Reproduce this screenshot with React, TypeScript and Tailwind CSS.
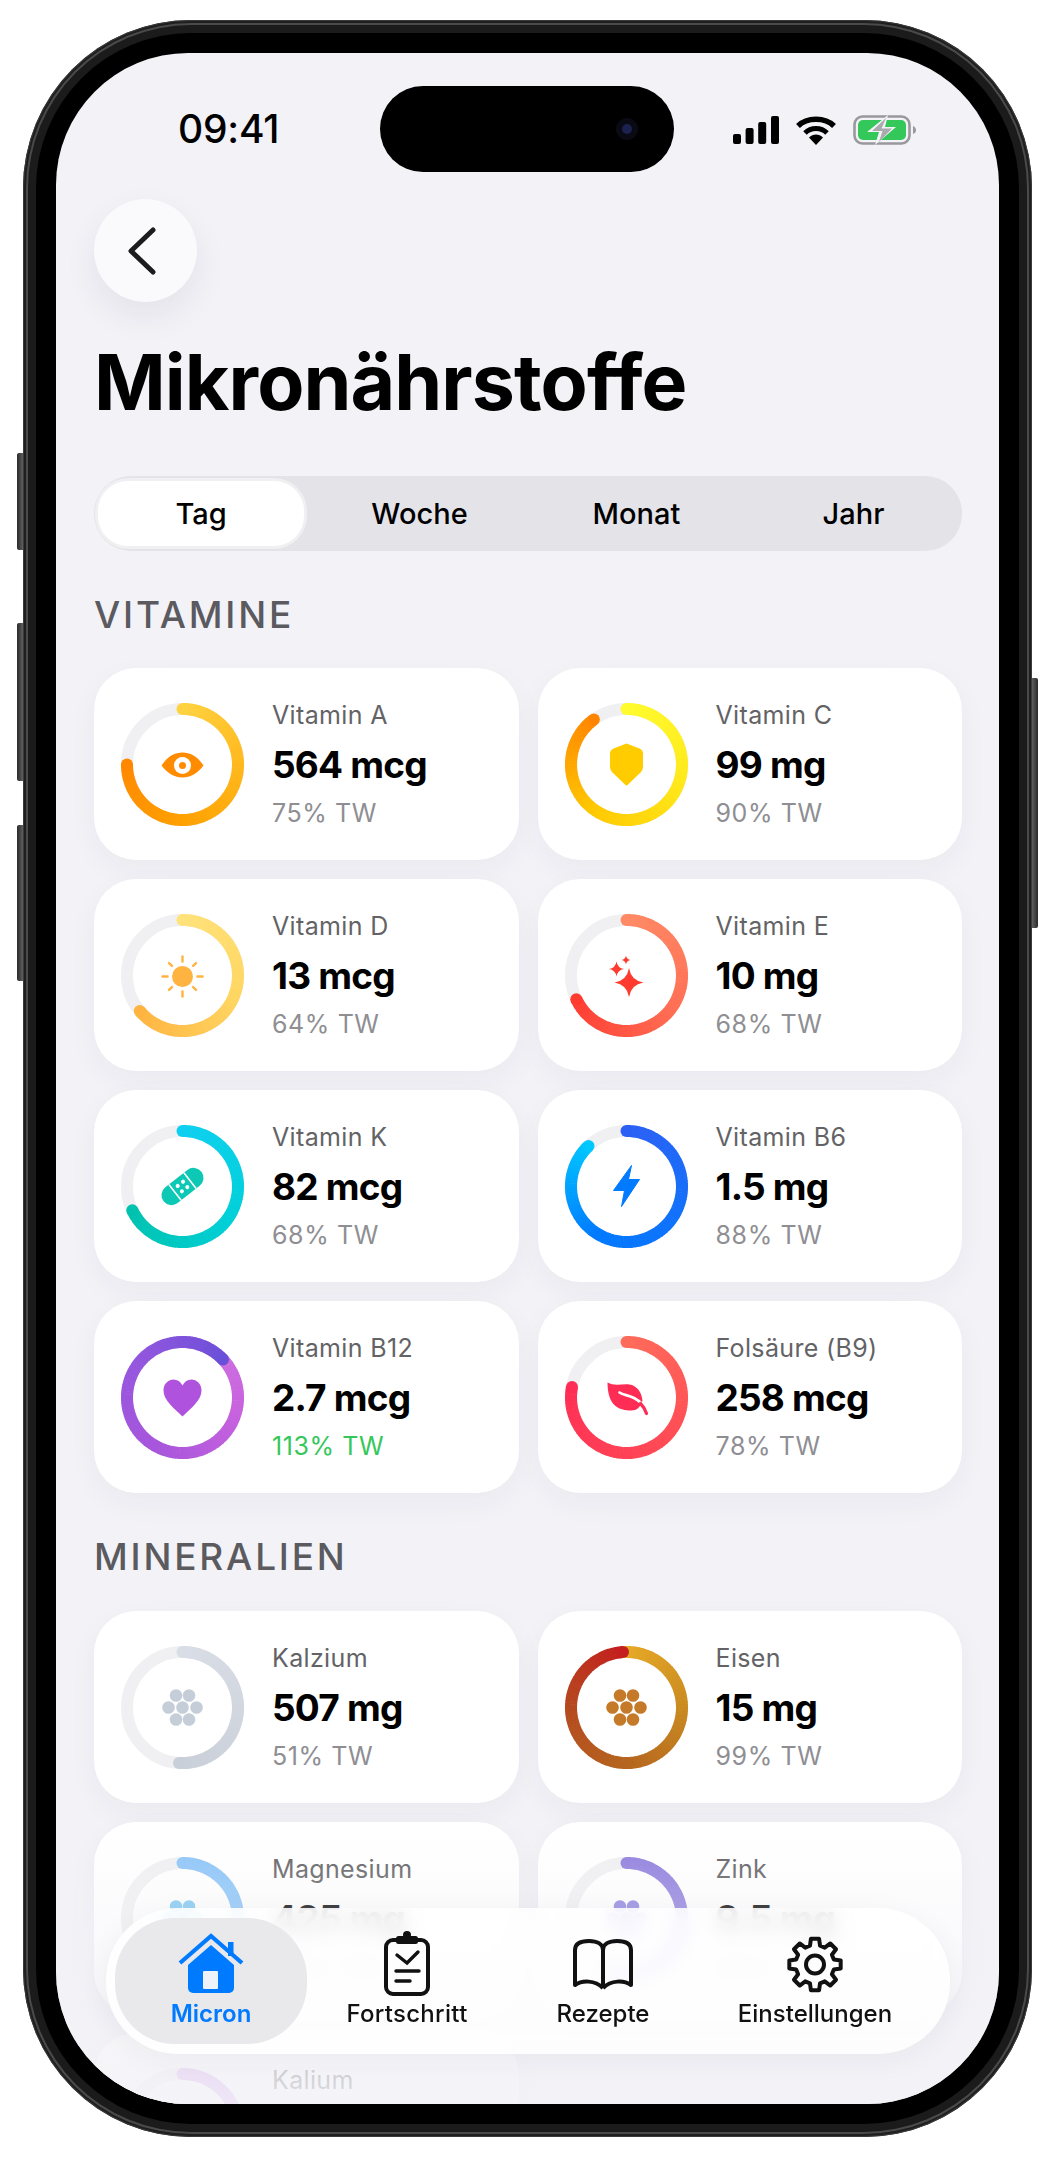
import React from "react";

const hex = (c: string) => [1, 3, 5].map((i) => parseInt(c.slice(i, i + 2), 16));
const mix = (stops: string[], t: number) => {
  const p = Math.min(0.9999, Math.max(0, t)) * (stops.length - 1);
  const i = Math.floor(p);
  const f = p - i;
  const a = hex(stops[i]);
  const b = hex(stops[i + 1]);
  return `rgb(${a.map((v, k) => Math.round(v + (b[k] - v) * f)).join(",")})`;
};

const C = 61.5;
const R = 55.5;
const pt = (deg: number) => {
  const r = ((deg - 90) * Math.PI) / 180;
  return [C + R * Math.cos(r), C + R * Math.sin(r)];
};

function Ring({ pct, stops, children }: { pct: number; stops: string[]; children?: React.ReactNode }) {
  const total = (pct / 100) * 360;
  const step = 3;
  const n = Math.ceil(total / step);
  const segs = [];
  for (let i = 0; i < n; i++) {
    const a0 = i * step;
    const a1 = Math.min(total, (i + 1) * step + 0.6);
    const [x0, y0] = pt(a0);
    const [x1, y1] = pt(a1);
    segs.push(
      <path
        key={i}
        d={`M${x0} ${y0}A${R} ${R} 0 0 1 ${x1} ${y1}`}
        fill="none"
        stroke={mix(stops, i / n)}
        strokeWidth={12}
      />
    );
  }
  const [sx, sy] = pt(0);
  const [ex, ey] = pt(total);
  return (
    <svg width={123} height={123} viewBox="0 0 123 123" className="shrink-0">
      <circle cx={C} cy={C} r={R} fill="none" stroke="#f0f0f2" strokeWidth={12} />
      <circle cx={sx} cy={sy} r={6} fill={mix(stops, 0)} />
      {segs}
      <circle cx={ex} cy={ey} r={6} fill={mix(stops, 1)} />
      <g transform={`translate(${C} ${C})`}>{children}</g>
    </svg>
  );
}

const Eye = () => (
  <g>
    <path d="M-21 1C-15-8-8-12 0-12S15-8 21 1C15 9 8 13 0 13S-15 9-21 1Z" fill="#ff8c00" />
    <circle cx={0} cy={1} r={8.5} fill="#fff" />
    <circle cx={0} cy={1} r={3.5} fill="#ff8c00" />
  </g>
);
const Shield = () => (
  <path
    d="M0-21L13-16Q16.500-14.500 16.500-11V2Q16.500 6 13 9L1 20.500Q0 21.500-1 20.500L-13 9Q-16.500 6-16.500 2V-11Q-16.500-14.500-13-16Z"
    fill="#ffcc00"
  />
);
const Sun = () => (
  <g transform="translate(0 1)">
    <circle r={10.5} fill="#ffb340" />
    {[0, 45, 90, 135, 180, 225, 270, 315].map((a) => (
      <line
        key={a}
        x1={0}
        y1={-15}
        x2={0}
        y2={a % 90 === 0 ? -20 : -19}
        stroke="#ffb340"
        strokeWidth={2.4}
        strokeLinecap="round"
        transform={`rotate(${a})`}
      />
    ))}
  </g>
);
const star = (x: number, y: number, r: number) =>
  `M${x} ${y - r}Q${x + r * 0.14} ${y - r * 0.14} ${x + r} ${y}Q${x + r * 0.14} ${y + r * 0.14} ${x} ${y + r}Q${x - r * 0.14} ${y + r * 0.14} ${x - r} ${y}Q${x - r * 0.14} ${y - r * 0.14} ${x} ${y - r}Z`;
const Sparkle = () => (
  <g fill="#ff3b30">
    <path d={star(2.5, 7, 14.5)} />
    <path d={star(-10, -6.5, 7.5)} />
    <path d={star(-0.5, -15.5, 4.5)} />
  </g>
);
const Bandage = () => (
  <g transform="rotate(52)">
    <rect x={-10} y={-24} width={20} height={48} rx={10} fill="#0cc8b4" />
    <path d="M-10-9.500H10M-10 9.500H10" stroke="#fff" strokeWidth={1.6} />
    <circle cx={-3.4} cy={-3.4} r={2} fill="#fff" />
    <circle cx={3.4} cy={-3.4} r={2} fill="#fff" />
    <circle cx={-3.4} cy={3.4} r={2} fill="#fff" />
    <circle cx={3.4} cy={3.4} r={2} fill="#fff" />
  </g>
);
const Bolt = () => (
  <path d="M5-21L-13 4H-2L-5 20L13-7H2Z" fill="#007aff" stroke="#007aff" strokeWidth={1} strokeLinejoin="round" />
);
const Heart = () => (
  <path
    d="M0 19C-8 11-19 3-19-7C-19-14-14-18-9-18C-5-18-2-16 0-12C2-16 5-18 9-18C14-18 19-14 19-7C19 3 8 11 0 19Z"
    fill="#af52de"
  />
);
const Leaf = () => (
  <g>
    <path d="M-19-15C-12-11-4-14 3-13C10-12 15-6 16 3C14 10 10 13 5 13C-8 13-19 8-19-15Z" fill="#ff2d55" />
    <path d="M-7-5C-2-1 5-4 15 6" stroke="#fff" strokeWidth={2.6} fill="none" strokeLinecap="round" />
    <path d="M14 6Q18 10 20 16" stroke="#ff2d55" strokeWidth={3.2} fill="none" strokeLinecap="round" />
  </g>
);
const Dots = ({ c }: { c: string }) => (
  <g fill={c}>
    {[
      [-6.5, -12],
      [6.5, -12],
      [-14, 0],
      [0, 0],
      [14, 0],
      [-6.5, 12],
      [6.5, 12],
    ].map(([x, y], i) => (
      <ellipse key={i} cx={x} cy={y} rx={6.3} ry={6.3} />
    ))}
  </g>
);

type Item = { name: string; value?: string; tw?: string; pct: number; stops: string[]; icon: React.ReactNode; green?: boolean };

const vit: Item[] = [
  { name: "Vitamin A", value: "564 mcg", tw: "75% TW", pct: 75, stops: ["#ffd23f", "#ffb81c", "#ffa000", "#ff8800"], icon: <Eye /> },
  { name: "Vitamin C", value: "99 mg", tw: "90% TW", pct: 90, stops: ["#fffb2e", "#ffe81a", "#ffc800", "#ff8500"], icon: <Shield /> },
  { name: "Vitamin D", value: "13 mcg", tw: "64% TW", pct: 64, stops: ["#ffe27a", "#ffd560", "#ffb340"], icon: <Sun /> },
  { name: "Vitamin E", value: "10 mg", tw: "68% TW", pct: 68, stops: ["#ff8a65", "#ff6f55", "#ff3b30"], icon: <Sparkle /> },
  { name: "Vitamin K", value: "82 mcg", tw: "68% TW", pct: 68, stops: ["#0fd0f0", "#00d0d8", "#00c2ae"], icon: <Bandage /> },
  { name: "Vitamin B6", value: "1.5 mg", tw: "88% TW", pct: 88, stops: ["#2c60f5", "#1470fa", "#007aff", "#00c8ff"], icon: <Bolt /> },
  { name: "Vitamin B12", value: "2.7 mcg", tw: "113% TW", pct: 113, green: true, stops: ["#d077e2", "#c862de", "#a856dc", "#9556de", "#6a50d8"], icon: <Heart /> },
  { name: "Folsäure (B9)", value: "258 mcg", tw: "78% TW", pct: 78, stops: ["#ff6b5a", "#ff4a55", "#ff2d55"], icon: <Leaf /> },
];
const min: Item[] = [
  { name: "Kalzium", value: "507 mg", tw: "51% TW", pct: 51, stops: ["#d9dde6", "#c9cfd8"], icon: <Dots c="#c5ced8" /> },
  { name: "Eisen", value: "15 mg", tw: "99% TW", pct: 99, stops: ["#e6a826", "#c98a20", "#b5651f", "#b54a1f", "#c41e1e"], icon: <Dots c="#c47a28" /> },
  { name: "Magnesium", value: "425 mg", tw: "58% TW", pct: 58, stops: ["#8ec5f8", "#7cc0f6"], icon: <Dots c="#7cc8f2" /> },
  { name: "Zink", value: "9.5 mg", tw: "55% TW", pct: 55, stops: ["#9180de", "#8b7ada"], icon: <Dots c="#8c82e0" /> },
  { name: "Kalium", pct: 52, stops: ["#d9a6ee", "#cf96e8"], icon: <Dots c="#c88ae6" /> },
];

function Card({ it }: { it: Item }) {
  return (
    <div className="flex h-[192px] items-center rounded-[42px] bg-white pl-[27px] shadow-[0_10px_30px_rgba(40,40,80,0.045)]">
      <Ring pct={it.pct} stops={it.stops}>
        {it.icon}
      </Ring>
      <div className="ml-[28px] flex h-[128px] flex-col">
        <div className="text-[25px] leading-[30px] font-normal tracking-[0.35px] text-[#636366]">{it.name}</div>
        {it.value && <div className="mt-[10px] text-[37px] leading-[50px] font-bold tracking-[-0.8px] text-black">{it.value}</div>}
        {it.tw && (
          <div className={`mt-[8px] text-[25px] leading-[30px] font-normal tracking-[0.6px] ${it.green ? "text-[#34c759]" : "text-[#8e8e93]"}`}>{it.tw}</div>
        )}
      </div>
    </div>
  );
}

const cog = (() => {
  const pts: string[] = [];
  const p = (r: number, a: number) => {
    const t = (a * Math.PI) / 180;
    return `${(33 + r * Math.cos(t)).toFixed(2)} ${(34.5 + r * Math.sin(t)).toFixed(2)}`;
  };
  for (let i = 0; i < 8; i++) {
    const a = i * 45 - 90;
    pts.push(p(19.5, a - 15), p(26, a - 9), p(26, a + 9), p(19.5, a + 15));
  }
  return "M" + pts.join("L") + "Z";
})();

export default function App() {
  return (
    <div className="relative h-[2157px] w-[1055px] overflow-hidden bg-white pt-[20px] pl-[23px] font-['Inter',sans-serif]">
      {/* hardware buttons */}
      <div className="absolute top-[453px] left-[17px] h-[97px] w-[7px] rounded-l-[2px] bg-gradient-to-r from-[#2a2a2a] to-[#6a6a6a]" />
      <div className="absolute top-[623px] left-[17px] h-[158px] w-[7px] rounded-l-[2px] bg-gradient-to-r from-[#2a2a2a] to-[#6a6a6a]" />
      <div className="absolute top-[825px] left-[17px] h-[156px] w-[7px] rounded-l-[2px] bg-gradient-to-r from-[#2a2a2a] to-[#6a6a6a]" />
      <div className="absolute top-[678px] left-[1031px] h-[250px] w-[7px] rounded-r-[2px] bg-gradient-to-l from-[#2a2a2a] to-[#6a6a6a]" />

      <div className="relative h-[2117px] w-[1009px] rounded-[168px] bg-[#1f1f20] p-[3px] shadow-[inset_0_0_0_1px_#3a3a3a]">
        <div className="h-full w-full rounded-[165px] bg-[#4a4a4b] p-[2px]">
          <div className="h-full w-full rounded-[163px] bg-[#1b1b1c] p-[8px]">
            <div className="h-full w-full rounded-[155px] bg-black p-[20px]">
              <div className="relative h-full w-full overflow-hidden rounded-[132px] bg-[#f2f2f7]">
                {/* status bar */}
                <div className="flex h-[146px] items-center justify-between pt-[7px] pr-[82px] pl-[122px]">
                  <span className="text-[39px] font-medium tracking-[-0.2px] text-black">09:41</span>
                  <div className="flex items-center gap-[17px]">
                    <svg width={46} height={28} viewBox="0 0 46 28">
                      <rect x={0} y={18} width={8} height={10} rx={2} fill="#000" />
                      <rect x={12.6} y={12} width={8} height={16} rx={2} fill="#000" />
                      <rect x={25.2} y={6} width={8} height={22} rx={2} fill="#000" />
                      <rect x={38} y={0} width={8} height={28} rx={2} fill="#000" />
                    </svg>
                    <svg width={40} height={30} viewBox="0 0 40 30">
                      <path d="M2 11C11 2 29 2 38 11" fill="none" stroke="#000" strokeWidth={5.4} />
                      <path d="M9 18C15 12 25 12 31 18" fill="none" stroke="#000" strokeWidth={5} />
                      <path d="M13 22.500C17 18.500 23 18.500 27 22.500L20 30Z" fill="#000" />
                    </svg>
                    <svg width={64} height={30} viewBox="0 0 64 30">
                      <rect x={1.5} y={1.5} width={55} height={27} rx={8} fill="none" stroke="#98989d" strokeWidth={2.6} />
                      <rect x={5} y={5} width={48} height={20} rx={5} fill="#34c759" />
                      <path d="M60 11C62 12 63 13 63 15S62 18 60 19Z" fill="#98989d" />
                      <path d="M35 0L14 17H26L22 30L43 12H32Z" fill="#f2f2f7" />
                      <path d="M33 3L19 16H29.500L26 27L39 13.500H28.500Z" fill="#a9a9ae" />
                    </svg>
                  </div>
                </div>
                {/* dynamic island */}
                <div className="absolute top-[33px] left-[324px] flex h-[86px] w-[294px] items-center justify-end rounded-[43px] bg-black pr-[36px]">
                  <div className="flex h-[22px] w-[22px] items-center justify-center rounded-full bg-[#0a0a14]">
                    <div className="h-[10px] w-[10px] rounded-full bg-[#1c2250]" />
                  </div>
                </div>

                <div className="pr-[37px] pl-[38px]">
                  <button className="flex h-[103px] w-[103px] items-center justify-center rounded-full bg-[#fafafc] pr-[8px] shadow-[0_14px_34px_rgba(30,30,60,0.07)]">
                    <svg width={32} height={50} viewBox="0 0 32 50">
                      <path d="M27 4L5 25L27 46" fill="none" stroke="#1c1c1e" strokeWidth={5} strokeLinecap="round" strokeLinejoin="round" />
                    </svg>
                  </button>
                  <h1 className="mt-[35px] text-[77px] leading-[90px] font-bold tracking-[-0.9px] text-black">Mikronährstoffe</h1>

                  <div className="mt-[49px] grid h-[75px] grid-cols-4 items-center rounded-[37px] bg-[#e3e3e8] text-[29px] font-medium text-black">
                    <div className="ml-[4px] flex h-[65px] w-[206px] items-center justify-center rounded-[30px] bg-white shadow-[0_0_0_3px_rgba(255,255,255,0.45)]">Tag</div>
                    <div className="text-center">Woche</div>
                    <div className="text-center">Monat</div>
                    <div className="text-center">Jahr</div>
                  </div>

                  <h2 className="mt-[42px] text-[37px] leading-[44px] font-medium tracking-[2.8px] text-[#5a5a5f]">VITAMINE</h2>
                  <div className="mt-[31px] grid grid-cols-2 gap-x-[19px] gap-y-[19px]">
                    {vit.map((it) => (
                      <Card key={it.name} it={it} />
                    ))}
                  </div>

                  <h2 className="mt-[42px] text-[37px] leading-[44px] font-medium tracking-[2.8px] text-[#5a5a5f]">MINERALIEN</h2>
                  <div className="mt-[32px] grid grid-cols-2 gap-x-[19px] gap-y-[19px]">
                    {min.map((it) => (
                      <Card key={it.name} it={it} />
                    ))}
                  </div>
                </div>

                {/* bottom fade */}
                <div className="absolute right-0 bottom-0 left-0 h-[270px] bg-gradient-to-b from-[#f2f2f7]/0 via-[#f2f2f7]/50 to-[#f2f2f7]/85" />

                {/* tab bar */}
                <div className="absolute right-[49px] bottom-[50px] left-[50px] flex h-[146px] items-center rounded-[72px] bg-white/85 pl-[9px] shadow-[0_6px_30px_rgba(30,30,60,0.05)] backdrop-blur-[10px]">
                  <div className="flex h-[126px] w-[192px] flex-col items-center rounded-[60px] bg-[#e9e9ec] pt-[12px]">
                    <svg width={66} height={66} viewBox="0 0 66 66">
                      <rect x={50} y={12} width={5.5} height={14} fill="#007aff" />
                      <path d="M2 33L33 6L64 33" fill="none" stroke="#007aff" strokeWidth={4.2} strokeLinejoin="miter" />
                      <path d="M33 15L56 35V58A5 5 0 0 1 51 63H15A5 5 0 0 1 10 58V35Z" fill="#007aff" />
                      <rect x={25} y={41} width={15} height={18} rx={1} fill="#eef3fb" />
                    </svg>
                    <span className="mt-[3px] text-[24px] leading-[30px] font-semibold text-[#007aff]">Micron</span>
                  </div>
                  <div className="flex h-[126px] w-[200px] flex-col items-center pt-[12px]">
                    <svg width={66} height={66} viewBox="0 0 66 66" fill="none" stroke="#111" strokeLinecap="round">
                      <rect x={12} y={10} width={42} height={54} rx={7} strokeWidth={4} />
                      <circle cx={33} cy={5} r={4} fill="#111" stroke="none" />
                      <rect x={22} y={6} width={22} height={8} rx={2.5} fill="#111" stroke="none" />
                      <path d="M23 25L33 33L44 22" strokeWidth={3.4} />
                      <path d="M22 41H45" strokeWidth={3.4} />
                      <path d="M22 51H36" strokeWidth={3.4} />
                    </svg>
                    <span className="mt-[3px] text-[24px] leading-[30px] font-medium tracking-[0.3px] text-[#111]">Fortschritt</span>
                  </div>
                  <div className="flex h-[126px] w-[192px] flex-col items-center pt-[12px]">
                    <svg width={66} height={66} viewBox="0 0 66 66" fill="none" stroke="#111" strokeWidth={4} strokeLinejoin="round">
                      <path d="M33 20C33 14 27 11 19 11C10 11 5 14 5 20V55C12 50 25 50 33 58" />
                      <path d="M33 20C33 14 39 11 47 11C56 11 61 14 61 20V55C54 50 41 50 33 58" />
                      <path d="M33 20V58" />
                    </svg>
                    <span className="mt-[3px] text-[24px] leading-[30px] font-medium text-[#111]">Rezepte</span>
                  </div>
                  <div className="flex h-[126px] w-[232px] flex-col items-center pt-[12px]">
                    <svg width={66} height={66} viewBox="0 0 66 66" fill="none" stroke="#111" strokeWidth={4} strokeLinejoin="round">
                      <path d={cog} />
                      <circle cx={33} cy={34.5} r={9} />
                    </svg>
                    <span className="mt-[3px] text-[24px] leading-[30px] font-medium text-[#111]">Einstellungen</span>
                  </div>
                </div>
              </div>
            </div>
          </div>
        </div>
      </div>
    </div>
  );
}
